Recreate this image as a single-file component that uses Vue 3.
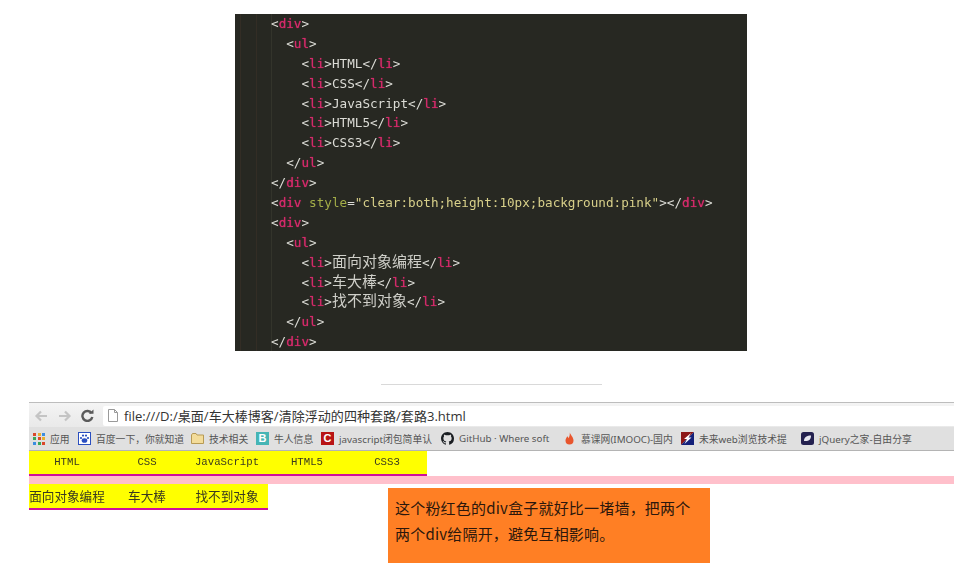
<script setup>
const t = (c, s) => ({ c, s })
const tag = (name, close) => [t('p', close ? '</' : '<'), t('r', name), t('p', '>')]
const li = (text, cjk) => [...tag('li'), t(cjk ? 'cjk' : 'p', text), ...tag('li', true)]
const codeLines = [
  tag('div'),
  [t('p', '  '), ...tag('ul')],
  [t('p', '    '), ...li('HTML')],
  [t('p', '    '), ...li('CSS')],
  [t('p', '    '), ...li('JavaScript')],
  [t('p', '    '), ...li('HTML5')],
  [t('p', '    '), ...li('CSS3')],
  [t('p', '  '), ...tag('ul', true)],
  tag('div', true),
  [t('p', '<'), t('r', 'div'), t('p', ' '), t('g', 'style'), t('p', '='), t('y', '"clear:both;height:10px;background:pink"'), t('p', '>'), ...tag('div', true)],
  tag('div'),
  [t('p', '  '), ...tag('ul')],
  [t('p', '    '), ...li('面向对象编程', true)],
  [t('p', '    '), ...li('车大棒', true)],
  [t('p', '    '), ...li('找不到对象', true)],
  [t('p', '  '), ...tag('ul', true)],
  tag('div', true)
]
const bookmarks = [
  { id: 'apps', label: '应用', w: 36 },
  { id: 'baidu', label: '百度一下，你就知道', w: 104 },
  { id: 'folder', label: '技术相关', w: 56 },
  { id: 'b', label: '牛人信息', w: 56 },
  { id: 'c', label: 'javascript闭包简单认', w: 111 },
  { id: 'gh', label: 'GitHub · Where soft', w: 113 },
  { id: 'fire', label: '慕课网(IMOOC)-国内', w: 109 },
  { id: 'flag', label: '未来web浏览技术提', w: 111 },
  { id: 'jq', label: 'jQuery之家-自由分享', w: 112 }
]
const dots = ['#d9482b', '#e8b030', '#3b8de0', '#3aa655', '#d9482b', '#e8b030', '#3b8de0', '#3aa655', '#d9482b']
const nav1 = ['HTML', 'CSS', 'JavaScript', 'HTML5', 'CSS3']
const nav2 = ['面向对象编程', '车大棒', '找不到对象']
</script>

<template>
  <div class="shot">
    <div class="code">
      <div v-for="(line, i) in codeLines" :key="i" class="line">
        <span v-for="(tok, j) in line" :key="j" :class="tok.c">{{ tok.s }}</span>
      </div>
    </div>
    <div class="rule"></div>
    <div class="browser">
      <div class="toolbar">
        <svg class="nav" width="14" height="14" viewBox="0 0 14 14"><path d="M13 7H3M7 2.5 2.5 7 7 11.500" fill="none" stroke="#c4c4c4" stroke-width="2.200"/></svg>
        <svg class="nav fwd" width="14" height="14" viewBox="0 0 14 14"><path d="M1 7h10M7 2.500 11.500 7 7 11.500" fill="none" stroke="#c4c4c4" stroke-width="2.200"/></svg>
        <svg class="reload" width="13" height="13" viewBox="0 0 13 13"><path d="M10.600 4.200A5 5 0 1 0 11.300 8" fill="none" stroke="#5a5a5a" stroke-width="2.400"/><path d="M7.800 4.800H12.500V0.500Z" fill="#5a5a5a"/></svg>
        <div class="omnibox">
          <svg width="10" height="13" viewBox="0 0 10 13"><path d="M.5.5h6l3 3v9H.5ZM6.500.5v3h3" fill="#fff" stroke="#9a9a9a"/></svg>
          <span class="url">file:///D:/桌面/车大棒博客/清除浮动的四种套路/套路3.html</span>
        </div>
      </div>
      <div class="marks">
        <div v-for="b in bookmarks" :key="b.id" class="mark" :style="{ width: b.w + 'px' }">
          <span v-if="b.id === 'apps'" class="apps"><i v-for="(d, k) in dots" :key="k" :style="{ background: d }"></i></span>
          <svg v-else-if="b.id === 'baidu'" class="ico" viewBox="0 0 13 13"><rect x=".5" y=".5" width="12" height="12" fill="#fff" stroke="#2b4fc0"/><ellipse cx="6.500" cy="8.500" rx="2.800" ry="2.300" fill="#2b4fc0"/><circle cx="3" cy="6" r="1.100" fill="#2b4fc0"/><circle cx="5" cy="3.600" r="1.100" fill="#2b4fc0"/><circle cx="8" cy="3.600" r="1.100" fill="#2b4fc0"/><circle cx="10" cy="6" r="1.100" fill="#2b4fc0"/></svg>
          <svg v-else-if="b.id === 'folder'" class="ico" viewBox="0 0 13 13"><path d="M.5 3V11.500H12.500V3H6L5 1.500H1.500Z" fill="#f3dc9a" stroke="#b79a55"/></svg>
          <span v-else-if="b.id === 'b'" class="ico tile teal">B</span>
          <span v-else-if="b.id === 'c'" class="ico tile red">C</span>
          <svg v-else-if="b.id === 'gh'" class="ico" viewBox="0 0 16 16"><path fill="#1b1f23" d="M8 0C3.580 0 0 3.580 0 8c0 3.540 2.290 6.530 5.470 7.590.4.070.55-.17.55-.38 0-.19-.01-.82-.01-1.490-2.010.37-2.530-.49-2.690-.94-.09-.23-.48-.94-.82-1.130-.28-.15-.68-.52-.01-.53.63-.01 1.080.58 1.230.82.720 1.210 1.870.870 2.330.660.070-.520.280-.870.510-1.070-1.780-.2-3.640-.890-3.640-3.950 0-.870.310-1.590.820-2.150-.080-.2-.360-1.020.080-2.120 0 0 .670-.210 2.200.820.640-.180 1.320-.270 2-.270s1.360.090 2 .270c1.530-1.040 2.200-.820 2.200-.820.440 1.100.160 1.920.080 2.120.510.560.820 1.270.820 2.150 0 3.070-1.870 3.750-3.650 3.950.290.250.540.730.540 1.480 0 1.070-.010 1.930-.010 2.200 0 .210.150.460.550.380A8.010 8.010 0 0 0 16 8c0-4.420-3.580-8-8-8Z"/></svg>
          <svg v-else-if="b.id === 'fire'" class="ico" viewBox="0 0 13 13"><path d="M6.800.500C7.500 3 10.500 5 10.500 8.500A4 4 0 0 1 2.500 8.500C2.500 6.500 3.700 5.600 4.200 4.200 5 5 5.300 5.500 5.400 6.200 6.500 4.800 7 2.500 6.800.500Z" fill="#e8552d"/></svg>
          <svg v-else-if="b.id === 'flag'" class="ico" viewBox="0 0 13 13"><path d="M0 0H13L0 13Z" fill="#8c1717"/><path d="M13 0V13H0Z" fill="#14207a"/><path d="M10 1 3 7H6L3.500 12 10.500 5.500H7.500Z" fill="#fff"/></svg>
          <svg v-else class="ico" viewBox="0 0 13 13"><rect width="13" height="13" rx="2.500" fill="#24214f"/><path d="M3 9C3 5 6 3.500 10 3.500 10 7.500 8 9.500 3 9Z" fill="#e8e8f0"/></svg>
          <span class="mark-text">{{ b.label }}</span>
        </div>
      </div>
      <div class="page">
        <ul class="nav-list first">
          <li v-for="n in nav1" :key="n">{{ n }}</li>
        </ul>
        <div class="pink"></div>
        <ul class="nav-list second">
          <li v-for="n in nav2" :key="n">{{ n }}</li>
        </ul>
        <div class="note">这个粉红色的div盒子就好比一堵墙，把两个<br>两个div给隔开，避免互相影响。</div>
      </div>
    </div>
  </div>
</template>

<style>
html, body { margin: 0; background: #fff; }
</style>

<style scoped>
.shot {
  width: 976px;
  height: 577px;
  overflow: hidden;
  background: #fff;
  display: flex;
  flex-direction: column;
  font-family: "Noto Sans", "Noto Sans CJK SC", sans-serif;
}
.code {
  box-sizing: border-box;
  width: 512px;
  height: 337px;
  flex: none;
  margin: 14px 0 0 235px;
  padding-left: 36px;
  overflow: hidden;
  background-color: #272822;
  background-image:
    linear-gradient(#332d25, #332d25),
    linear-gradient(#332d25, #332d25),
    linear-gradient(#33342b, #33342b);
  background-size: 1px 100%, 1px 100%, 1px 100%;
  background-position: 5px 0, 21px 0, 36px 0;
  background-repeat: no-repeat;
  font-family: "DejaVu Sans Mono", "Noto Sans CJK SC", monospace;
  font-size: 12.650px;
  filter: blur(0.3px);
}
.line { height: 19.900px; line-height: 19.900px; white-space: pre; }
.p { color: #dcdcd6; }
.r { color: #d42a6a; text-shadow: 0 0 1px #d42a6a; }
.g { color: #a3ad48; }
.y { color: #d8d08a; }
.cjk { color: #cfcfc9; font-family: "Noto Sans CJK SC", sans-serif; font-size: 15px; line-height: 1; }

.rule {
  flex: none;
  width: 221px;
  height: 1px;
  margin: 33px 0 0 381px;
  background: #d9d9d9;
}
.browser {
  flex: none;
  width: 925px;
  margin: 17px 0 0 29px;
  display: flex;
  flex-direction: column;
}
.toolbar {
  box-sizing: border-box;
  height: 25px;
  display: flex;
  align-items: center;
  padding: 1px 0 0 5px;
  border-top: 1px solid #bdbdbd;
  background: linear-gradient(#f4f4f4, #e9e9e9);
}
.nav { flex: none; margin-right: 10px; }
.fwd { margin-right: 9px; }
.reload { flex: none; margin-right: 8px; }
.omnibox {
  flex: 1;
  height: 20px;
  margin-left: 1px;
  display: flex;
  align-items: center;
  gap: 6px;
  padding-left: 5px;
  background: #fff;
  border-radius: 2px 0 0 2px;
}
.url { font-size: 13.050px; color: #333; white-space: nowrap; font-family: "Open Sans", "Noto Sans CJK SC", sans-serif; }
.marks {
  box-sizing: border-box;
  height: 24px;
  display: flex;
  align-items: center;
  padding-left: 4px;
  background: #e0e0e0;
  border-bottom: 1px solid #b4b4b4;
}
.mark {
  flex: none;
  display: flex;
  align-items: center;
  gap: 5px;
  margin-right: 9px;
}
.mark-text { font-size: 9.800px; color: #555; white-space: nowrap; }
.ico { flex: none; width: 13px; height: 13px; display: block; }
.tile {
  color: #fff;
  font: bold 11px/13px "Liberation Sans", sans-serif;
  text-align: center;
}
.teal { background: #45b5b5; }
.red { background: #b81414; }
.apps {
  flex: none;
  width: 12px;
  display: grid;
  grid-template-columns: repeat(3, 3px);
  grid-auto-rows: 3px;
  gap: 1.500px;
}
.apps i { display: block; }

.page {
  position: relative;
  height: 126px;
  background: #fff;
  overflow: hidden;
}
.nav-list {
  list-style: none;
  margin: 0;
  padding: 0;
  display: flex;
  overflow: hidden;
  box-sizing: border-box;
  height: 25px;
  background: #ff0;
  border-bottom: 2px solid #d0109a;
  color: #3a3a20;
  filter: blur(0.25px);
}
.first { width: 398px; font: 10.700px/23px "Liberation Mono", monospace; }
.second { width: 239px; height: 26px; font: 12.600px/23px "Noto Sans CJK SC", sans-serif; }
.nav-list li { flex: none; width: 80px; text-align: center; white-space: nowrap; }
.nav-list li:first-child { margin-left: -2px; }
.pink { height: 8px; background: #ffc0cb; }
.note {
  position: absolute;
  left: 359px;
  top: 37px;
  box-sizing: border-box;
  width: 322px;
  height: 75px;
  padding: 7px 0 0 7px;
  background: #ff7f24;
  color: #2b170c;
  font-size: 15px;
  letter-spacing: 0.2px;
  line-height: 26px;
  white-space: nowrap;
  font-family: "Noto Sans CJK SC", sans-serif;
}
</style>
